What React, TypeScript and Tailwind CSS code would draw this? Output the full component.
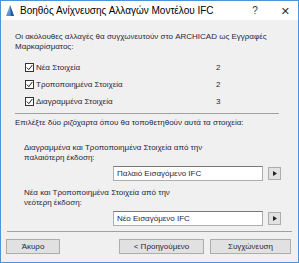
import React from "react";

const font = { fontFamily: '"Liberation Sans", "DejaVu Sans", sans-serif' };

function Check({ label, count }: { label: string; count: number }) {
    return (
        <div className="flex items-center h-[17px]">
            <div className="w-[9px] h-[9px] ml-[10px] border border-[#333] bg-white flex items-center justify-center">
                <svg width="7" height="7" viewBox="0 0 7 7">
                    <path d="M0.8 3.6 L2.8 5.6 L6.3 1" stroke="#222" strokeWidth="1" fill="none"/>
                </svg>
            </div>
            <span className="ml-[2px] w-[180px]">{label}</span>
            <span>{count}</span>
        </div>
    );
}

function Picker({ value }: { value: string }) {
    return (
        <div className="flex items-center mt-[3px] ml-[98px]">
            <div className="w-[150px] h-[15px] bg-white border border-[#adadad] border-t-[#7a7a7a] flex items-center pl-[3px]">
                {value}
            </div>
            <div className="ml-[5px] w-[13px] h-[13px] bg-[#e1e1e1] border border-[#adadad] flex items-center justify-center">
                <svg width="4" height="5" viewBox="0 0 4 5"><path d="M0 0 L4 2.5 L0 5 Z" fill="#222"/></svg>
            </div>
        </div>
    );
}

export default function App() {
    return (
        <div style={font} className="w-[299px] h-[263px] flex flex-col bg-[#f0f0f0] border border-[#4f94d4] text-[8px] leading-[10px] text-[#26263e]">
            <div className="h-[19px] bg-white flex items-center shrink-0">
                <svg width="10" height="13" viewBox="0 0 10 13" className="ml-[4px]">
                    <defs>
                        <linearGradient id="g" x1="0" y1="0" x2="1" y2="1">
                            <stop offset="0" stopColor="#9cc6ee"/>
                            <stop offset="1" stopColor="#2f6fc0"/>
                        </linearGradient>
                    </defs>
                    <path d="M1 12 L5 1 L9 12 Z" fill="url(#g)"/>
                    <path d="M5 1 L9 12 L6 12 Z" fill="#1f5aa8"/>
                </svg>
                <span className="ml-[5px] text-[10px] text-black">Βοηθός Ανίχνευσης Αλλαγών Μοντέλου IFC</span>
                <span className="ml-auto text-[10px] text-[#333]">?</span>
                <span className="ml-[23px] mr-[8px] text-[11px] text-[#333]">✕</span>
            </div>
            <div className="flex flex-col px-[14px] pt-[12px]">
                <p>Οι ακόλουθες αλλαγές θα συγχωνευτούν στο ARCHICAD ως Εγγραφές<br/>Μαρκαρίσματος:</p>
                <div className="mt-[7px]">
                    <Check label="Νέα Στοιχεία" count={2}/>
                    <Check label="Τροποποιημένα Στοιχεία" count={2}/>
                    <Check label="Διαγραμμένα Στοιχεία" count={3}/>
                </div>
                <div className="mt-[3px] mr-[5px] h-[1px] bg-[#a0a0a0]"/>
                <p className="mt-[4px]">Επιλέξτε δύο ριζόχαρτα όπου θα τοποθετηθούν αυτά τα στοιχεία:</p>
                <p className="mt-[15px] ml-[9px]">Διαγραμμένα και Τροποποιημένα Στοιχεία από την<br/>παλαιότερη έκδοση:</p>
                <Picker value="Παλαιό Εισαγόμενο IFC"/>
                <p className="mt-[7px] ml-[9px]">Νέα και Τροποποιημένα Στοιχεία από την<br/>νεότερη έκδοση:</p>
                <Picker value="Νέο Εισαγόμενο IFC"/>
            </div>
            <div className="mt-[5px] mx-[6px] h-[1px] bg-[#a0a0a0]"/>
            <div className="flex mt-[7px] px-[5px]">
                <button className="w-[54px] h-[15px] bg-[#e1e1e1] border border-[#adadad] leading-[13px]">Άκυρο</button>
                <button className="ml-[59px] w-[85px] h-[15px] bg-[#e1e1e1] border border-[#adadad] leading-[13px]">&lt; Προηγούμενο</button>
                <button className="ml-[6px] w-[81px] h-[15px] bg-[#e1e1e1] border border-[#adadad] leading-[13px]">Συγχώνευση</button>
            </div>
        </div>
    );
}
